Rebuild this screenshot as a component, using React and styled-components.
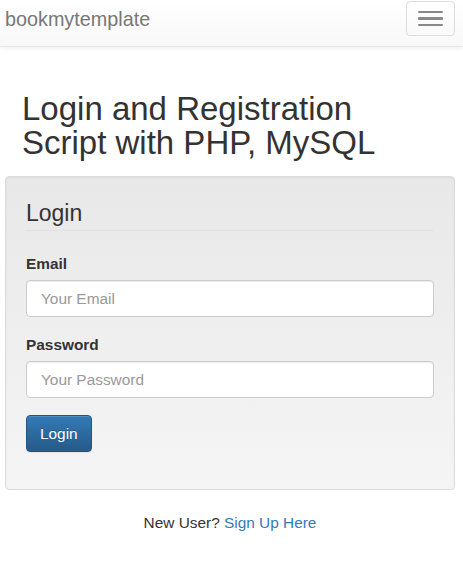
import React from 'react';
import styled, { createGlobalStyle } from 'styled-components';

const GlobalStyle = createGlobalStyle`
  * {
    box-sizing: border-box;
  }
  body {
    margin: 0;
    background: #ffffff;
    color: #333333;
    font-family: 'Liberation Sans', Arial, Helvetica, sans-serif;
    font-size: 15.4px;
    line-height: 22px;
  }
`;

const Navbar = styled.nav`
  display: flex;
  justify-content: space-between;
  align-items: flex-start;
  height: 47px;
  padding: 0 8px 0 5px;
  background: linear-gradient(to bottom, #ffffff 0%, #f8f8f8 100%);
  border-bottom: 1px solid #e7e7e7;
  box-shadow: inset 0 1px 0 rgba(255, 255, 255, 0.15), 0 1px 5px rgba(0, 0, 0, 0.075);

  .brand {
    margin-top: 8px;
    font-size: 19.8px;
    line-height: 22px;
    color: #777777;
    text-decoration: none;
  }
`;

const Toggle = styled.button`
  display: flex;
  flex-direction: column;
  align-items: center;
  justify-content: center;
  gap: 4px;
  width: 49px;
  height: 35px;
  margin-top: 1px;
  padding: 0;
  background: transparent;
  border: 1px solid #dddddd;
  border-radius: 4px;
  cursor: pointer;

  span {
    display: block;
    width: 25px;
    height: 2.5px;
    border-radius: 1px;
    background: #888888;
  }
`;

const Container = styled.main`
  padding: 0 8px 0 5px;
`;

const Title = styled.h2`
  margin: 45px 0 16px;
  padding-left: 17px;
  font-size: 33px;
  font-weight: 400;
  line-height: 34px;
  color: #333333;
`;

const Well = styled.div`
  padding: 20px;
  margin-bottom: 22px;
  border: 1px solid #dcdcdc;
  border-radius: 4px;
  background: linear-gradient(to bottom, #e8e8e8 0%, #f5f5f5 100%);
  box-shadow: inset 0 1px 3px rgba(0, 0, 0, 0.05), 0 1px 0 rgba(255, 255, 255, 0.1);
`;

const Legend = styled.div`
  margin-bottom: 22px;
  font-size: 23px;
  line-height: 33px;
  color: #333333;
  border-bottom: 1px solid #e2e2e2;
`;

const FormGroup = styled.div`
  margin-bottom: 17px;

  label {
    display: block;
    margin-bottom: 5px;
    font-weight: 700;
  }
`;

const Input = styled.input`
  display: block;
  width: 100%;
  height: 37px;
  padding: 6px 14px;
  font-family: inherit;
  font-size: 15.4px;
  color: #555555;
  background: #ffffff;
  border: 1px solid #cccccc;
  border-radius: 4px;
  box-shadow: inset 0 1px 1px rgba(0, 0, 0, 0.075);
  outline: none;

  &::placeholder {
    color: #999999;
  }
`;

const Button = styled.button`
  height: 37px;
  padding: 0 13px;
  font-family: inherit;
  font-size: 15.4px;
  color: #ffffff;
  text-shadow: 0 -1px 0 rgba(0, 0, 0, 0.2);
  background: linear-gradient(to bottom, #337ab7 0%, #265a88 100%);
  border: 1px solid #245580;
  border-radius: 4px;
  box-shadow: inset 0 1px 0 rgba(255, 255, 255, 0.15), 0 1px 1px rgba(0, 0, 0, 0.075);
  cursor: pointer;
`;

const Footer = styled.p`
  margin: 0;
  text-align: center;
  color: #333333;

  a {
    color: #337ab7;
    text-decoration: none;
  }
`;

export default function App() {
  return (
    <>
      <GlobalStyle />
      <Navbar>
        <a className="brand" href="#">bookmytemplate</a>
        <Toggle aria-label="Toggle navigation">
          <span />
          <span />
          <span />
        </Toggle>
      </Navbar>
      <Container>
        <Title>
          Login and Registration
          <br />
          Script with PHP, MySQL
        </Title>
        <Well>
          <Legend>Login</Legend>
          <FormGroup>
            <label htmlFor="email">Email</label>
            <Input id="email" type="email" placeholder="Your Email" />
          </FormGroup>
          <FormGroup>
            <label htmlFor="password">Password</label>
            <Input id="password" type="password" placeholder="Your Password" />
          </FormGroup>
          <FormGroup>
            <Button type="button">Login</Button>
          </FormGroup>
        </Well>
        <Footer>
          New User? <a href="#">Sign Up Here</a>
        </Footer>
      </Container>
    </>
  );
}
